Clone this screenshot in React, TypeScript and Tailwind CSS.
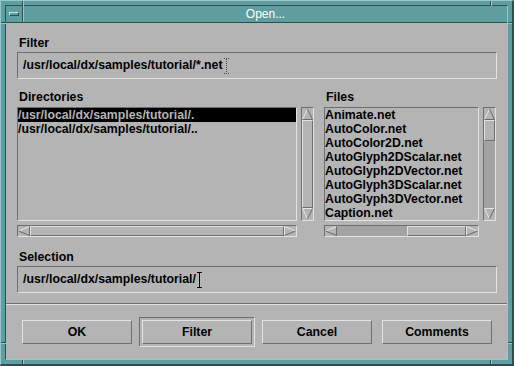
import React from 'react';

// Motif-style "Open..." file selection dialog

type Dir = 'up' | 'down' | 'left' | 'right';

function Arrow({ dir }: { dir: Dir }) {
  const lt = '#e4e4e4';
  const dk = '#6a6a6a';
  if (dir === 'up' || dir === 'down') {
    return (
      <div className="h-[12px] w-full bg-[#b4b4b4]">
        <svg width="11" height="12" viewBox="0 0 11 12">
          {dir === 'up' ? (
            <>
              <line x1="0.5" y1="11.5" x2="5.5" y2="1" stroke={lt} strokeWidth="1" />
              <line x1="5.5" y1="1" x2="10.5" y2="11.5" stroke={dk} strokeWidth="1" />
              <line x1="0.5" y1="11.5" x2="10.5" y2="11.5" stroke={dk} strokeWidth="1" />
            </>
          ) : (
            <>
              <line x1="0.5" y1="0.5" x2="10.5" y2="0.5" stroke={lt} strokeWidth="1" />
              <line x1="0.5" y1="0.5" x2="5.5" y2="11" stroke={lt} strokeWidth="1" />
              <line x1="10.5" y1="0.5" x2="5.5" y2="11" stroke={dk} strokeWidth="1" />
            </>
          )}
        </svg>
      </div>
    );
  }
  return (
    <div className="h-full w-[12px] shrink-0 bg-[#b4b4b4]">
      <svg width="12" height="10" viewBox="0 0 12 10">
        {dir === 'left' ? (
          <>
            <line x1="0.5" y1="5" x2="11.5" y2="0.5" stroke={lt} strokeWidth="1" />
            <line x1="11.5" y1="0.5" x2="11.5" y2="9.5" stroke={dk} strokeWidth="1" />
            <line x1="11.5" y1="9.5" x2="0.5" y2="5" stroke={dk} strokeWidth="1" />
          </>
        ) : (
          <>
            <line x1="0.5" y1="0.5" x2="0.5" y2="9.5" stroke={lt} strokeWidth="1" />
            <line x1="0.5" y1="0.5" x2="11.5" y2="5" stroke={lt} strokeWidth="1" />
            <line x1="0.5" y1="9.5" x2="11.5" y2="5" stroke={dk} strokeWidth="1" />
          </>
        )}
      </svg>
    </div>
  );
}

function VScroll({ thumb }: { thumb: string }) {
  return (
    <div className="flex h-[114px] w-[13px] shrink-0 flex-col border border-t-[#6e6e6e] border-l-[#6e6e6e] border-b-[#e2e2e2] border-r-[#e2e2e2] bg-[#a3a3a3]">
      <Arrow dir="up" />
      <div className="flex flex-1 flex-col">
        <div className={`border border-t-[#e2e2e2] border-l-[#e2e2e2] border-b-[#6e6e6e] border-r-[#6e6e6e] bg-[#b4b4b4] ${thumb}`} />
      </div>
      <Arrow dir="down" />
    </div>
  );
}

function HScroll({ width, thumb }: { width: string; thumb: string }) {
  return (
    <div className={`flex h-[12px] border border-t-[#6e6e6e] border-l-[#6e6e6e] border-b-[#e2e2e2] border-r-[#e2e2e2] bg-[#a3a3a3] ${width}`}>
      <Arrow dir="left" />
      <div className="flex flex-1">
        <div className={`h-full border border-t-[#e2e2e2] border-l-[#e2e2e2] border-b-[#6e6e6e] border-r-[#6e6e6e] bg-[#b4b4b4] ${thumb}`} />
      </div>
      <Arrow dir="right" />
    </div>
  );
}

function IBeam({ dotted }: { dotted?: boolean }) {
  const c = dotted ? '#4a4a4a' : '#000';
  return (
    <svg width="5" height="16" viewBox="0 0 5 16" className="ml-[1px] shrink-0">
      <line x1="0" y1="0.5" x2="5" y2="0.5" stroke={c} strokeDasharray={dotted ? '1 1' : undefined} />
      <line x1="2.5" y1="1" x2="2.5" y2="15" stroke={c} strokeDasharray={dotted ? '1 1' : undefined} />
      <line x1="0" y1="15.5" x2="5" y2="15.5" stroke={c} strokeDasharray={dotted ? '1 1' : undefined} />
    </svg>
  );
}

function Field({ value, dotted }: { value: string; dotted?: boolean }) {
  return (
    <div className="flex h-[27px] w-[480px] items-center border border-t-[#6e6e6e] border-l-[#6e6e6e] border-b-[#e2e2e2] border-r-[#e2e2e2] pl-[5px]">
      <span className="whitespace-nowrap">{value}</span>
      <IBeam dotted={dotted} />
    </div>
  );
}

function Label({ children }: { children: React.ReactNode }) {
  return <div className="h-[14px] pl-[2px] leading-[14px]">{children}</div>;
}

function Button({ label, isDefault }: { label: string; isDefault?: boolean }) {
  return (
    <div
      className={`flex h-[30px] w-[116px] items-center justify-center ${
        isDefault ? 'border border-t-[#6e6e6e] border-l-[#6e6e6e] border-b-[#e2e2e2] border-r-[#e2e2e2]' : ''
      }`}
    >
      <div className="flex h-[24px] w-[110px] items-center justify-center border border-t-[#e2e2e2] border-l-[#e2e2e2] border-b-[#6e6e6e] border-r-[#6e6e6e]">
        {label}
      </div>
    </div>
  );
}

const files = [
  'Animate.net',
  'AutoColor.net',
  'AutoColor2D.net',
  'AutoGlyph2DScalar.net',
  'AutoGlyph2DVector.net',
  'AutoGlyph3DScalar.net',
  'AutoGlyph3DVector.net',
  'Caption.net',
];

export default function App() {
  return (
    <div className="relative h-[366px] w-[514px] border-t border-l border-r-2 border-b-2 border-t-[#95c8ca] border-l-[#95c8ca] border-r-[#2f4f4f] border-b-[#2f4f4f] bg-[#5f9ea0] p-[4px] font-['Liberation_Sans',Arial,sans-serif]">
      {/* resize handle marks on the frame */}
      <div className="absolute top-0 left-[21px] h-[5px] w-[2px] border-l border-l-[#2f4f4f] border-r border-r-[#95c8ca]" />
      <div className="absolute top-0 left-[489px] h-[5px] w-[2px] border-l border-l-[#2f4f4f] border-r border-r-[#95c8ca]" />
      <div className="absolute bottom-0 left-[21px] h-[4px] w-[2px] border-l border-l-[#2f4f4f] border-r border-r-[#95c8ca]" />
      <div className="absolute bottom-0 left-[489px] h-[4px] w-[2px] border-l border-l-[#2f4f4f] border-r border-r-[#95c8ca]" />
      <div className="absolute top-[21px] left-0 h-[2px] w-[5px] border-t border-t-[#2f4f4f] border-b border-b-[#95c8ca]" />
      <div className="absolute top-[21px] right-0 h-[2px] w-[4px] border-t border-t-[#2f4f4f] border-b border-b-[#95c8ca]" />
      <div className="absolute top-[341px] left-0 h-[2px] w-[5px] border-t border-t-[#2f4f4f] border-b border-b-[#95c8ca]" />
      <div className="absolute top-[341px] right-0 h-[2px] w-[4px] border-t border-t-[#2f4f4f] border-b border-b-[#95c8ca]" />

      <div className="flex h-full flex-col border border-t-[#2f4f4f] border-l-[#2f4f4f] border-b-[#95c8ca] border-r-[#95c8ca]">
        {/* title bar */}
        <div className="flex h-[17px] shrink-0 border-b border-b-[#2f4f4f]">
          <div className="flex w-[17px] items-center justify-center border-r border-r-[#2f4f4f]">
            <div className="h-[4px] w-[10px] border border-t-[#c8e4e5] border-l-[#c8e4e5] border-b-[#2f4f4f] border-r-[#2f4f4f]" />
          </div>
          <div className="flex flex-1 items-center justify-center border-l border-l-[#95c8ca] text-[12px] leading-[16px] text-white">
            Open...
          </div>
        </div>

        {/* dialog body */}
        <div className="flex flex-1 flex-col bg-[#b4b4b4] text-[12.3px] font-bold text-black">
          <div className="flex flex-col pl-[11px] pt-[13px]">
            <Label>Filter</Label>
            <div className="mt-[2px]">
              <Field value="/usr/local/dx/samples/tutorial/*.net" dotted />
            </div>

            <div className="mt-[11px] flex gap-[10px]">
              <div className="flex flex-col">
                <Label>Directories</Label>
                <div className="mt-[3px] flex gap-[4px]">
                  <div className="h-[114px] w-[280px] overflow-hidden border border-t-[#6e6e6e] border-l-[#6e6e6e] border-b-[#e2e2e2] border-r-[#e2e2e2] leading-[14px]">
                    <div className="h-[14px] whitespace-nowrap bg-black text-[#b4b4b4]">/usr/local/dx/samples/tutorial/.</div>
                    <div className="h-[14px] whitespace-nowrap">/usr/local/dx/samples/tutorial/..</div>
                  </div>
                  <VScroll thumb="flex-1" />
                </div>
                <div className="mt-[4px]">
                  <HScroll width="w-[280px]" thumb="flex-1" />
                </div>
              </div>

              <div className="flex flex-col">
                <Label>Files</Label>
                <div className="mt-[3px] flex gap-[4px]">
                  <div className="h-[114px] w-[155px] overflow-hidden border border-t-[#6e6e6e] border-l-[#6e6e6e] border-b-[#e2e2e2] border-r-[#e2e2e2] leading-[14px]">
                    {files.map((f) => (
                      <div key={f} className="h-[14px] whitespace-nowrap">
                        {f}
                      </div>
                    ))}
                  </div>
                  <VScroll thumb="h-[21px]" />
                </div>
                <div className="mt-[4px]">
                  <HScroll width="w-[155px]" thumb="ml-[70px] w-[59px]" />
                </div>
              </div>
            </div>

            <div className="mt-[13px]">
              <Label>Selection</Label>
            </div>
            <div className="mt-[2px]">
              <Field value="/usr/local/dx/samples/tutorial/" />
            </div>
          </div>

          <div className="mt-[10px] h-[2px] border-t border-b border-t-[#6e6e6e] border-b-[#e2e2e2]" />

          <div className="mt-[12px] flex gap-[4px] pl-[13px]">
            <Button label="OK" />
            <Button label="Filter" isDefault />
            <Button label="Cancel" />
            <Button label="Comments" />
          </div>
        </div>
      </div>
    </div>
  );
}
